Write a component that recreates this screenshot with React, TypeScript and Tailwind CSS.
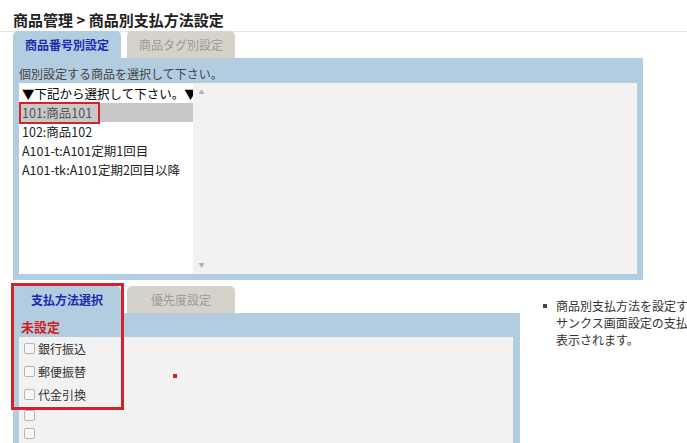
import React from "react";

const font = { fontFamily: '"Noto Sans CJK JP", "Noto Sans", sans-serif' };

const products = [
  { id: "none", label: "▼下記から選択して下さい。▼" },
  { id: "101", label: "101:商品101", selected: true },
  { id: "102", label: "102:商品102" },
  { id: "A101-t", label: "A101-t:A101定期1回目" },
  { id: "A101-tk", label: "A101-tk:A101定期2回目以降" },
];

const payments = ["銀行振込", "郵便振替", "代金引換"];

function Checkbox() {
  return <span className="inline-block w-[11px] h-[11px] rounded-[2px] border border-[#b5b5b5] bg-[#f7f7f7] shrink-0" />;
}

function Tab({ label, active }: { label: string; active?: boolean }) {
  return (
    <div
      className={
        "w-[108px] h-[27px] rounded-t-[5px] flex items-center justify-center text-[12px] " +
        (active ? "bg-[#b3cde0] text-[#1c2bb0] font-bold" : "bg-[#d6d2ca] text-[#9a9a9a]")
      }
    >
      {label}
    </div>
  );
}

export default function App() {
  return (
    <div className="relative w-[687px] h-[443px] overflow-hidden bg-white text-[#333]" style={font}>
      <div className="pl-[13px] pt-[10px] h-[32px] border-b border-[#e4e4e4] text-[15px] font-bold leading-[20px] text-[#222]">
        商品管理 &gt; 商品別支払方法設定
      </div>

      <div className="flex gap-[6px] pl-[13px] items-end h-[26px]">
        <Tab label="商品番号別設定" active />
        <Tab label="商品タグ別設定" />
      </div>

      <div className="ml-[13px] w-[630px] h-[222px] bg-[#b3cde0] px-[6px] pt-[7px]">
        <div className="text-[12px] leading-[18px] text-[#444]">個別設定する商品を選択して下さい。</div>
        <div className="flex h-[191px]">
          <div className="w-[174px] bg-white pt-[1px]">
            {products.map((p) => (
              <div
                key={p.id}
                className={
                  "h-[19px] pl-[3px] text-[12.5px] leading-[19px] whitespace-nowrap " +
                  (p.selected ? "bg-[#c8c8c8] text-[#555]" : p.id === "none" ? "text-black" : "text-[#222]")
                }
              >
                {p.label}
              </div>
            ))}
          </div>
          <div className="flex-1 bg-[#f2f2f2] flex">
            <div className="w-[17px] flex flex-col justify-between items-center py-[6px] text-[6px] text-[#b0b0b0] leading-none">
              <span>▲</span>
              <span>▼</span>
            </div>
          </div>
        </div>
      </div>

      <div className="flex mt-[6px]">
        <div className="ml-[13px] w-[507px] shrink-0">
          <div className="flex gap-[6px] h-[27px] items-end">
            <Tab label="支払方法選択" active />
            <Tab label="優先度設定" />
          </div>
          <div className="bg-[#b3cde0] pl-[6px] pr-[7px] h-[140px]">
            <div className="h-[24px] pl-[2px] pt-[5px] text-[13px] leading-[18px] font-bold text-[#d41c1c]">未設定</div>
            <div className="bg-[#f2f2f2] h-[120px] pl-[5px]">
              {payments.map((p) => (
                <div key={p} className="flex items-center gap-[3px] h-[23px] text-[12px] text-[#333]">
                  <Checkbox />
                  <span>{p}</span>
                </div>
              ))}
              {[0, 1, 2].map((i) => (
                <div key={i} className="flex items-center h-[18px]">
                  <Checkbox />
                </div>
              ))}
            </div>
          </div>
        </div>

        <ul className="ml-[23px] pt-[11px] text-[12px] leading-[17px] text-[#333] whitespace-nowrap">
          <li className="flex">
            <span className="w-[13px] shrink-0 pt-[7px]">
              <span className="block w-[4px] h-[4px] bg-[#444]" />
            </span>
            <span>
              商品別支払方法を設定すると、
              <br />
              サンクス画面設定の支払方法に
              <br />
              表示されます。
            </span>
          </li>
        </ul>
      </div>

      {/* annotation highlights */}
      <div className="absolute left-[19px] top-[102px] w-[81px] h-[22px] border-2 border-[#d8222a]" />
      <div className="absolute left-[11px] top-[283px] w-[113px] h-[127px] border-[3px] border-[#d8222a]" />
      <div className="absolute left-[173px] top-[374px] w-[4px] h-[4px] bg-[#d8222a]" />
    </div>
  );
}
